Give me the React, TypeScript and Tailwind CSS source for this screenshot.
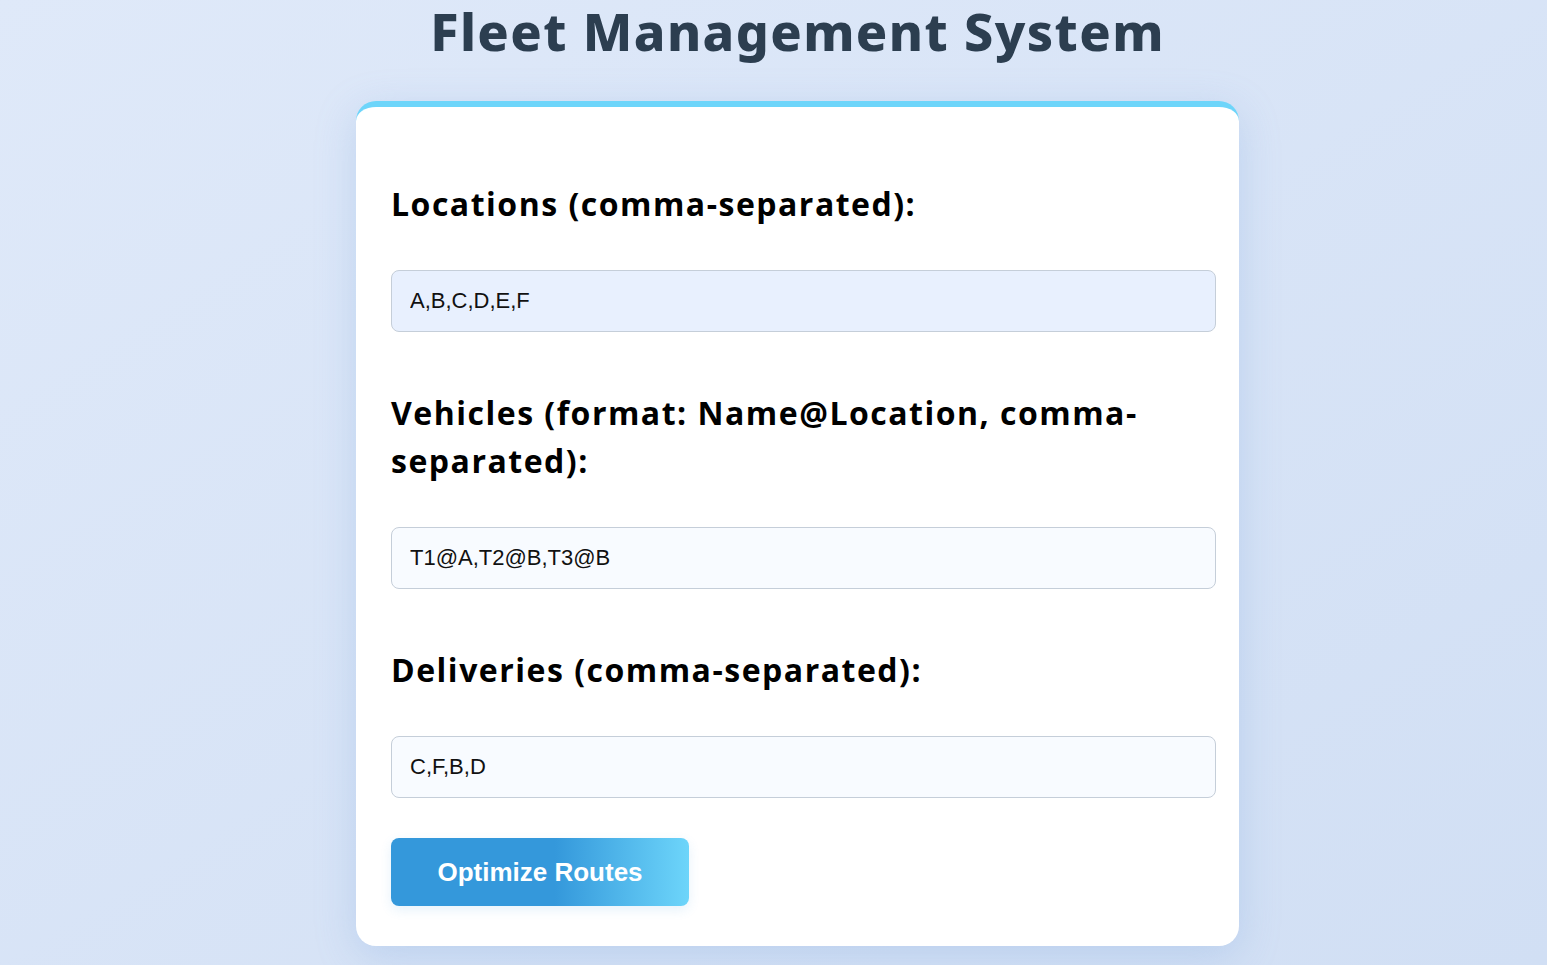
import React from "react";

export default function App() {
  const labelCls =
    "block text-[32px] leading-[48px] font-bold tracking-[1.5px] text-black [font-family:'Open_Sans','Noto_Sans',sans-serif]";
  const inputCls =
    "block h-[62px] w-[825px] rounded-[8px] border border-[#c5ced9] px-[18px] text-[22px] text-[#111] outline-none [font-family:'Liberation_Sans',Arial,sans-serif]";
  return (
    <div className="min-h-[965px] w-full bg-gradient-to-br from-[#dfe9f9] to-[#d1dff4] pl-[48px] flex flex-col items-center">
      <h1 className="text-[52px] leading-[62px] font-extrabold tracking-[1.4px] text-[#2c3e50] [font-family:'Noto_Sans',sans-serif]">
        Fleet Management System
      </h1>
      <div className="mt-[39px] w-[883px] rounded-[20px] border-t-[6px] border-[#6dd5fa] bg-white pl-[35px] pr-[23px] pt-[73px] pb-[40px] shadow-[0_10px_40px_rgba(120,160,220,0.28)]">
        <label className={labelCls}>Locations (comma-separated):</label>
        <input
          className={inputCls + " mt-[42px] bg-[#e8f0fe]"}
          defaultValue="A,B,C,D,E,F"
        />
        <label className={labelCls + " mt-[57px] pr-[40px]"}>
          Vehicles (format: Name@Location, comma-separated):
        </label>
        <input
          className={inputCls + " mt-[42px] bg-[#f8fbff]"}
          defaultValue="T1@A,T2@B,T3@B"
        />
        <label className={labelCls + " mt-[57px]"}>Deliveries (comma-separated):</label>
        <input
          className={inputCls + " mt-[42px] bg-[#f8fbff]"}
          defaultValue="C,F,B,D"
        />
        <button className="mt-[40px] h-[68px] w-[298px] rounded-[8px] bg-[linear-gradient(90deg,#3498db_0%,#3498db_55%,#6dd5fa_100%)] text-[26px] font-bold text-white shadow-[0_4px_12px_rgba(52,152,219,0.12)] [font-family:'Liberation_Sans',Arial,sans-serif]">
          Optimize Routes
        </button>
      </div>
    </div>
  );
}
